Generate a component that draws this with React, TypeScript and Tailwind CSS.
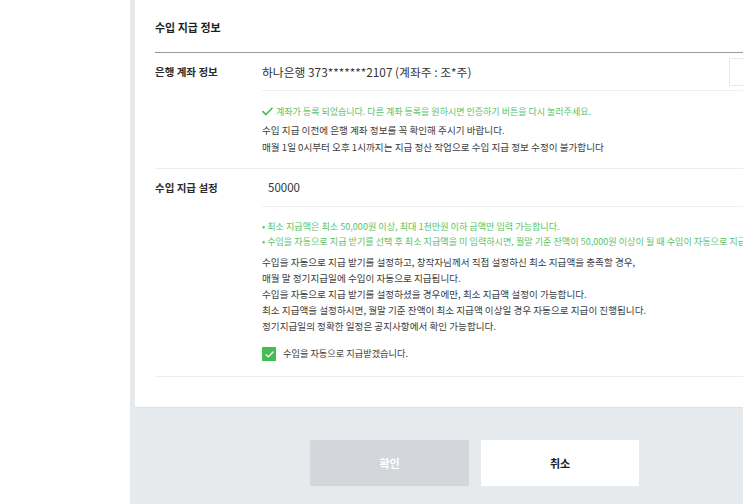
import React from "react";

const font = { fontFamily: '"Noto Sans CJK KR", "Noto Sans", sans-serif' };

function CheckIcon({ className }: { className?: string }) {
  return (
    <svg viewBox="0 0 12 10" className={className} fill="none">
      <path d="M1 5.2 4.3 8.4 11 1.4" stroke="currentColor" strokeWidth="1.8" strokeLinecap="round" strokeLinejoin="round" />
    </svg>
  );
}

export default function App() {
  return (
    <div style={font} className="w-[743px] h-[504px] overflow-hidden flex bg-white">
      {/* left blank area */}
      <div className="w-[130px] shrink-0 bg-white" />

      <div className="w-[900px] shrink-0 flex flex-col bg-[#e7eaed]">
        {/* Panel */}
        <div className="ml-[5px] h-[408px] bg-white px-[20px] border-b border-[#dde0e4]">
          {/* Title */}
          <div className="h-[53px] pt-[17px] border-b border-[#9a9a9a]">
            <h2 className="text-[11px] leading-[20px] font-bold text-[#1f1f1f]">수입 지급 정보</h2>
          </div>

          {/* Row 1 : bank account */}
          <div className="flex border-b border-[#eeeeee] pb-[12px]">
            <div className="w-[107px] shrink-0 h-[38px] flex items-center text-[10.5px] font-bold text-[#2a2a2a]">
              은행 계좌 정보
            </div>
            <div className="flex-1">
              <div className="h-[38px] flex items-center border-b border-[#f0f0f0]">
                <span className="flex-1 text-[11.8px] text-[#333]">하나은행 373*******2107 (계좌주 : 조*주)</span>
                <span className="w-[90px] h-[28px] border border-[#e8e8e8] mr-[191px]" />
              </div>
              <div className="mt-[13px] flex items-center text-[9px] leading-[15px] text-[#57c46a]">
                <CheckIcon className="w-[11px] h-[9px] mr-[3px] text-[#3fbd55]" />
                계좌가 등록 되었습니다. 다른 계좌 등록을 원하시면 인증하기 버튼을 다시 눌러주세요.
              </div>
              <div className="mt-[3px] text-[9.6px] leading-[17px] text-[#3d3d3d]">
                <p>수입 지급 이전에 은행 계좌 정보를 꼭 확인해 주시기 바랍니다.</p>
                <p>매월 1일 0시부터 오후 1시까지는 지급 정산 작업으로 수입 지급 정보 수정이 불가합니다</p>
              </div>
            </div>
          </div>

          {/* Row 2 : payout setting */}
          <div className="flex border-b border-[#eeeeee] pb-[15px]">
            <div className="w-[107px] shrink-0 h-[38px] flex items-center text-[10.5px] font-bold text-[#2a2a2a]">
              수입 지급 설정
            </div>
            <div className="flex-1">
              <div className="h-[38px] flex items-center border-b border-[#f0f0f0] pl-[6px] text-[11.5px] text-[#333]">
                50000
              </div>
              <div className="mt-[12px] text-[9.1px] leading-[15px] text-[#57c46a] whitespace-nowrap">
                <p>• 최소 지급액은 최소 50,000원 이상, 최대 1천만원 이하 금액만 입력 가능합니다.</p>
                <p>• 수입을 자동으로 지급 받기를 선택 후 최소 지급액을 미 입력하시면, 월말 기준 잔액이 50,000원 이상이 될 때 수입이 자동으로 지급됩니다.</p>
              </div>
              <div className="mt-[5px] text-[9.6px] leading-[16px] text-[#3d3d3d]">
                <p>수입을 자동으로 지급 받기를 설정하고, 창작자님께서 직접 설정하신 최소 지급액을 충족할 경우,</p>
                <p>매월 말 정기지급일에 수입이 자동으로 지급됩니다.</p>
                <p>수입을 자동으로 지급 받기를 설정하셨을 경우에만, 최소 지급액 설정이 가능합니다.</p>
                <p>최소 지급액을 설정하시면, 월말 기준 잔액이 최소 지급액 이상일 경우 자동으로 지급이 진행됩니다.</p>
                <p>정기지급일의 정확한 일정은 공지사항에서 확인 가능합니다.</p>
              </div>
              <label className="mt-[13px] flex items-center gap-[7px] text-[9.2px] text-[#3d3d3d]">
                <span className="w-[14px] h-[14px] bg-[#45bd57] flex items-center justify-center">
                  <CheckIcon className="w-[9px] h-[7px] text-white" />
                </span>
                수입을 자동으로 지급받겠습니다.
              </label>
            </div>
          </div>
        </div>

        {/* Footer buttons */}
        <div className="flex gap-[12px] pl-[180px] pt-[32px]">
          <button className="w-[159px] h-[46px] bg-[#d3d7db] text-white text-[11px] font-bold">확인</button>
          <button className="w-[158px] h-[46px] bg-white text-[#222] text-[11px] font-bold">취소</button>
        </div>
      </div>
    </div>
  );
}
